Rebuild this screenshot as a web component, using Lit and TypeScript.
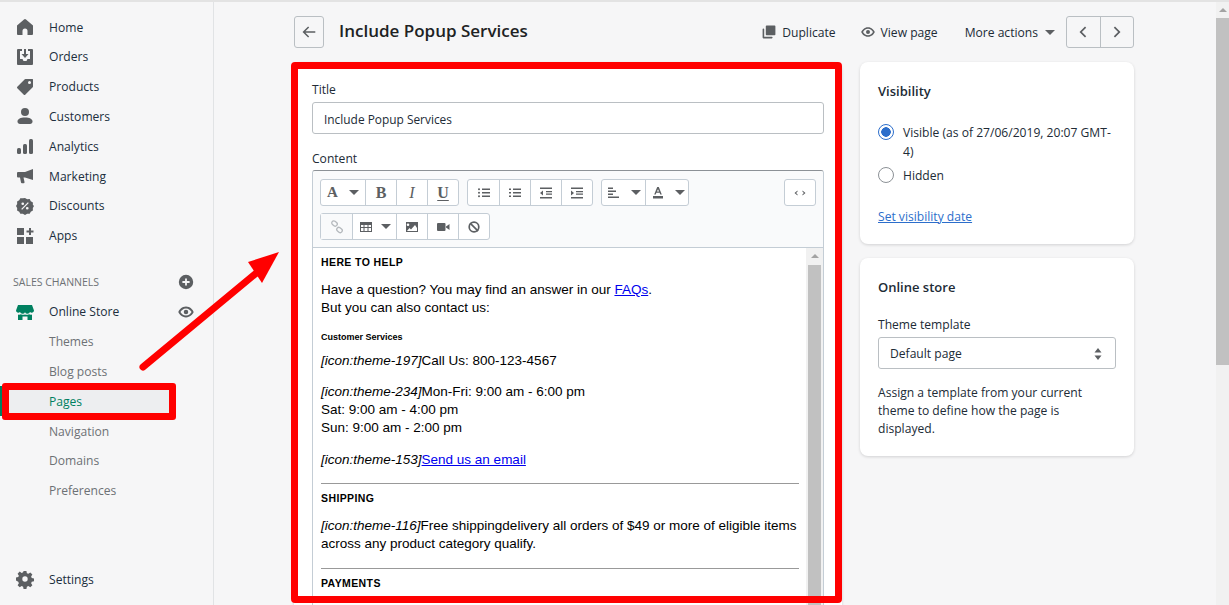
import { LitElement, css, html, svg } from 'lit';
import { customElement } from 'lit/decorators.js';

const ICONS: Record<string, unknown> = {
  home: svg`<path d="M18 8.600 11 2.400a1.500 1.500 0 0 0-2 0L2 8.600V17a1 1 0 0 0 1 1h4.500v-4a2.500 2.500 0 0 1 5 0v4H17a1 1 0 0 0 1-1z"/>`,
  orders: svg`<path fill-rule="evenodd" d="M3 2h4v2H5v8h2.500l1 2h3l1-2H15V4h-2V2h4a1 1 0 0 1 1 1v14a1 1 0 0 1-1 1H3a1 1 0 0 1-1-1V3a1 1 0 0 1 1-1z"/><path d="M9 2h2v5h2.500L10 11 6.500 7H9z"/>`,
  products: svg`<path fill-rule="evenodd" d="M18 2.500V9.500a1 1 0 0 1-.3.7l-7.500 7.500a1 1 0 0 1-1.400 0L2.300 11.200a1 1 0 0 1 0-1.400L9.800 2.300a1 1 0 0 1 .7-.3h7a.5.5 0 0 1 .5.5zM14.500 7a1.500 1.500 0 1 0 0-3 1.500 1.500 0 0 0 0 3z"/>`,
  customers: svg`<circle cx="10" cy="6" r="4"/><path d="M2.500 15.500c0-2.500 3-4 7.500-4s7.500 1.500 7.500 4c0 1.500-1 2.500-2.500 2.500H5c-1.500 0-2.500-1-2.500-2.500z"/>`,
  analytics: svg`<rect x="2" y="12" width="4" height="6" rx="1.500"/><rect x="8" y="8" width="4" height="10" rx="1.500"/><rect x="14" y="3" width="4" height="15" rx="1.500"/>`,
  marketing: svg`<path d="M18 3v11L10 11.500H8.500l1 4.500a1 1 0 0 1-1 1.200H7a1 1 0 0 1-1-.8L5 11.500H3a1 1 0 0 1-1-1v-3.500a1 1 0 0 1 1-1h7z"/>`,
  discounts: svg`<path fill-rule="evenodd" d="M10 1l2.400 1.400 2.800-.1 1.200 2.400 2.400 1.300-.1 2.700L20 10l-1.300 2.300.1 2.700-2.400 1.300-1.200 2.400-2.800-.1L10 20l-2.400-1.400-2.800.1-1.200-2.400-2.400-1.300.1-2.700L0 10l1.300-2.300-.1-2.700 2.400-1.300 1.200-2.400 2.800.1zM7.500 6a1.500 1.500 0 1 0 0 3 1.500 1.500 0 0 0 0-3zm5 5a1.500 1.500 0 1 0 0 3 1.500 1.500 0 0 0 0-3zm.7-5.200-7.400 7.400 1 1 7.400-7.400z" transform="translate(1 1) scale(.9)"/>`,
  apps: svg`<rect x="2" y="2" width="7" height="7"/><rect x="2" y="11" width="7" height="7"/><rect x="11" y="11" width="7" height="7"/><path d="M14 2h2v2.500h2.500v2H16V9h-2V6.500h-2.500v-2H14z"/>`,
  store: svg`<path d="M3 3h14l2 5.500a2.300 2.300 0 0 1-4 1.500 2.700 2.700 0 0 1-5 .3A2.700 2.700 0 0 1 5 10 2.300 2.300 0 0 1 1 8.500z"/><path d="M3 12.500c1 .4 2 .3 3-.2 1.200.7 2.800.7 4 .1 1.200.6 2.800.6 4-.1 1 .5 2 .6 3 .2V18h-4.500v-3.500h-5V18H3z"/>`,
  settings: svg`<path fill-rule="evenodd" d="M8.400 1h3.200l.5 2.500 1.600.7 2.200-1.400 2.300 2.300-1.400 2.200.7 1.600 2.500.5v3.200l-2.500.5-.7 1.600 1.400 2.200-2.300 2.300-2.200-1.400-1.600.7-.5 2.500H8.400l-.5-2.500-1.600-.7-2.200 1.400-2.300-2.300 1.400-2.200-.7-1.600L0 11.600V8.400l2.500-.5.7-1.600-1.400-2.200 2.300-2.300 2.200 1.400 1.600-.7zM10 7a3 3 0 1 0 0 6 3 3 0 0 0 0-6z" transform="translate(1 1) scale(.9)"/>`,
  plus: svg`<path fill-rule="evenodd" d="M10 2a8 8 0 1 0 0 16 8 8 0 0 0 0-16zm1 4H9v3H6v2h3v3h2v-3h3V9h-3z"/>`,
  eye: svg`<path fill-rule="evenodd" d="M10 4c-4.500 0-7.500 3.500-8.500 6 1 2.500 4 6 8.500 6s7.500-3.500 8.500-6c-1-2.500-4-6-8.500-6zm0 2c3 0 5 2 6.200 4-1.200 2-3.200 4-6.200 4s-5-2-6.200-4C5 8 7 6 10 6zm0 1.500a2.500 2.500 0 1 0 0 5 2.500 2.500 0 0 0 0-5z"/>`,
  duplicate: svg`<path d="M7 2h10a1 1 0 0 1 1 1v10a1 1 0 0 1-1 1H7a1 1 0 0 1-1-1V3a1 1 0 0 1 1-1z"/><path d="M2 6.500a1 1 0 0 1 2 0V16h9.500a1 1 0 0 1 0 2H3a1 1 0 0 1-1-1z"/>`,
};

const TOOL_ICONS: Record<string, unknown> = {
  ul: svg`<path d="M6 3.500h8V5H6zM6 7h8v1.500H6zM6 10.500h8V12H6z"/><circle cx="3" cy="4.200" r="1"/><circle cx="3" cy="7.700" r="1"/><circle cx="3" cy="11.200" r="1"/>`,
  ol: svg`<path d="M6 3.500h8V5H6zM6 7h8v1.500H6zM6 10.500h8V12H6zM2 3.500h2V5H2zM2 7h2v1.500H2zM2 10.500h2V12H2z"/>`,
  outdent: svg`<path d="M2 2.500h12V4H2zM8 6h6v1.200H8zM8 8.500h6v1.200H8zM2 12h12v1.500H2zM2 8l3-2.500v5z"/>`,
  indent: svg`<path d="M2 2.500h12V4H2zM7 6h7v1.200H7zM7 8.500h7v1.200H7zM2 12h12v1.500H2zM5 8 2 5.500v5z"/>`,
  align: svg`<path d="M2 2.500h5V4H2zM2 5.500h8V7H2zM2 8.500h5V10H2zM2 11.500h11V13H2z"/>`,
  color: svg`<path d="M7.200 2h1.600l3 7.500h-1.500l-.7-1.800H6.400l-.7 1.800H4.200zM8 4.300 6.900 6.500h2.200zM3 11h10v2.500H3z"/>`,
  link: svg`<g fill="none" stroke="currentColor" stroke-width="1.300"><rect x="2.500" y="2.500" width="6" height="4" rx="2" transform="rotate(40 5.500 4.500)"/><rect x="7.500" y="9" width="6" height="4" rx="2" transform="rotate(40 10.500 11)"/></g>`,
  table: svg`<path fill-rule="evenodd" d="M2 3h12v10H2zm1 3v2h2.500V6zm3.500 0v2h3V6zm4 0v2H13V6zM3 9v3h2.500V9zm3.500 0v3h3V9zm4 0v3H13V9z"/>`,
  image: svg`<path fill-rule="evenodd" d="M2 3h12v10H2zm2 1.500a1.300 1.300 0 1 0 0 2.600 1.300 1.300 0 0 0 0-2.600zM3 12h10V9l-2-3-4 4.500L5.500 9z"/>`,
  video: svg`<rect x="2" y="4" width="8.500" height="8" rx="1"/><path d="M11 7.500 14.500 5v6L11 8.500z"/>`,
  clear: svg`<circle cx="8" cy="8" r="4.800" fill="none" stroke="currentColor" stroke-width="1.700"/><path d="M4.700 3.500l8 8-1.200 1.200-8-8z"/>`,
  code: svg`<path d="M5.500 5.500 2.500 8l3 2.500v-1.200L4 8l1.500-1.300zM10.500 5.500l3 2.500-3 2.500v-1.200L12 8l-1.500-1.300z"/>`,
};

const NAV = [
  ['home', 'Home'], ['orders', 'Orders'], ['products', 'Products'], ['customers', 'Customers'],
  ['analytics', 'Analytics'], ['marketing', 'Marketing'], ['discounts', 'Discounts'], ['apps', 'Apps'],
];

const SUB_NAV = ['Themes', 'Blog posts', 'Pages', 'Navigation', 'Domains', 'Preferences'];

@customElement('app-root')
export class AppRoot extends LitElement {
  static styles = css`
    :host {
      display: block;
      position: relative;
      height: 605px;
      overflow: hidden;
      background: #f6f6f7;
      font-family: "Open Sans", "Noto Sans", sans-serif;
      font-size: 12.100px;
      color: #212b36;
    }
    .page {
      display: flex;
      height: 603px;
      border-top: 2px solid #e3e3e3;
    }
    svg { display: block; fill: currentColor; flex: none; }

    .sidebar {
      width: 214px;
      flex: none;
      box-sizing: border-box;
      border-right: 1px solid #e1e3e5;
      padding: 10.200px 0 11px;
      display: flex;
      flex-direction: column;
    }
    .row {
      height: 29.800px;
      flex: none;
      display: flex;
      align-items: center;
      gap: 14px;
      padding-left: 15px;
      color: #202e3d;
    }
    .row svg { width: 20px; height: 20px; color: #5c5f62; }
    .row .trail { margin-left: auto; margin-right: 18px; width: 18px; height: 18px; }
    .section {
      height: 20px;
      margin: 21.500px 0 5px;
      padding-left: 13px;
      display: flex;
      align-items: center;
      justify-content: space-between;
      font-size: 10.500px;
      color: #6d7175;
    }
    .section svg { width: 18px; height: 18px; color: #5c5f62; margin-right: 18px; }
    .row.store svg:first-child { color: #008060; }
    .sub { padding-left: 49px; color: #6d7175; }
    .sub.active { color: #008060; background: #edeef0; box-shadow: inset 2px 0 #008060; margin-right: 40px; }
    .settings { margin-top: auto; }

    .main {
      flex: 1;
      min-width: 0;
      padding: 14px 0 0 80px;
      overflow: hidden;
    }
    .header {
      width: 840px;
      height: 32px;
      display: flex;
      align-items: center;
      margin-bottom: 14px;
    }
    .icon-btn {
      width: 30px;
      height: 32px;
      box-sizing: border-box;
      border: 1px solid #babfc3;
      border-radius: 3px;
      display: flex;
      align-items: center;
      justify-content: center;
      color: #5c5f62;
    }
    .icon-btn svg { width: 18px; height: 18px; }
    h1 {
      margin: 0 0 3px 15px;
      font-size: 17px;
      font-weight: 600;
      color: #202223;
    }
    .actions {
      margin-left: auto;
      display: flex;
      align-items: center;
    }
    .action {
      display: flex;
      align-items: center;
      gap: 5px;
      margin-right: 24px;
    }
    .action.view { margin-right: 27px; }
    .action svg { width: 16px; height: 16px; color: #5c5f62; }
    .more { margin-right: 11px; gap: 7px; }
    .caret {
      width: 0;
      height: 0;
      border-left: 5px solid transparent;
      border-right: 5px solid transparent;
      border-top: 5px solid #5c5f62;
    }
    .pager {
      width: 68px;
      height: 32px;
      box-sizing: border-box;
      border: 1px solid #babfc3;
      border-radius: 3px;
      display: flex;
      color: #5c5f62;
    }
    .pager span {
      flex: 1;
      display: flex;
      align-items: center;
      justify-content: center;
    }
    .pager span + span { border-left: 1px solid #babfc3; }
    .pager svg { width: 16px; height: 16px; }

    .columns {
      display: flex;
      align-items: flex-start;
      gap: 18px;
      width: 840px;
    }
    .card {
      background: #fff;
      border-radius: 8px;
      box-shadow: 0 1px 3px rgba(63, 63, 68, 0.2);
      box-sizing: border-box;
      padding: 19px 18px 18px;
    }
    .form { width: 548px; flex: none; height: 700px; }
    .side { width: 274px; flex: none; display: flex; flex-direction: column; gap: 14px; }
    label { display: block; line-height: 18px; }
    .input {
      height: 32px;
      box-sizing: border-box;
      margin: 3px 0 16px;
      padding: 1px 11px 0;
      border: 1px solid #babfc3;
      border-radius: 3px;
      display: flex;
      align-items: center;
      font-size: 11.900px;
    }

    .editor {
      margin-top: 2px;
      border: 1px solid #c4cdd5;
      border-top-color: #8c9196;
      border-radius: 3px 3px 0 0;
      height: 520px;
    }
    .toolbar {
      height: 77px;
      box-sizing: border-box;
      background: #f9fafb;
      border-bottom: 1px solid #c4cdd5;
      border-radius: 3px 3px 0 0;
      padding: 8px 7px 0;
      display: flex;
      flex-direction: column;
      gap: 7px;
    }
    .tool-row { display: flex; gap: 8px; }
    .group {
      display: flex;
      height: 27px;
      box-sizing: border-box;
      border: 1px solid #c4cdd5;
      border-radius: 3px;
      background: #fff;
    }
    .code-btn { margin-left: auto; }
    .code-btn .tool { width: 30px; }
    .tool {
      width: 31px;
      box-sizing: border-box;
      display: flex;
      align-items: center;
      justify-content: center;
      gap: 7px;
      color: #5c5f62;
      font: 700 16px "Liberation Serif", serif;
    }
    .tool + .tool { border-left: 1px solid #c4cdd5; }
    .tool.wide { width: 44px; }
    .tool.font { gap: 11px; font-size: 15px; }
    .tool.narrow { width: 43px; gap: 9px; }
    .tool.disabled { background: #f9fafb; color: #b5b9bd; }
    .tool svg { width: 16px; height: 16px; }
    .tool i { font-style: italic; font-weight: 400; }
    .tool u { text-underline-offset: 2px; }

    .body {
      display: flex;
      height: 440px;
      font: 13.500px/18px "Liberation Sans", Arial, sans-serif;
      color: #000;
    }
    .content { flex: 1; min-width: 0; padding: 7px 7px 0 8px; }
    .content p { margin: 0; }
    .content a { color: #0000ee; }
    .content hr { border: 0; border-top: 1px solid #999; margin: 14px 0 7px; }
    .content .h4 { font-weight: 700; font-size: 10.500px; line-height: 14px; letter-spacing: .4px; }
    .content .h6 { font-weight: 700; font-size: 9px; line-height: 12px; margin: 14px 0 9px; }
    .content .gap-s { margin-top: 12px; }
    .content .gap-m { margin-top: 13px; }
    .content .gap-l { margin-top: 14px; }
    .content .rule-b { margin-top: 15px; }
    .content .tiny { font-weight: 400; font-size: 9.500px; margin-top: 10px; }

    .bar {
      width: 17px;
      flex: none;
      background: #f1f1f1;
      display: flex;
      flex-direction: column;
      align-items: center;
    }
    .up {
      width: 0;
      height: 0;
      margin: 6px 0 7px;
      border-left: 4px solid transparent;
      border-right: 4px solid transparent;
      border-bottom: 4px solid #a3a3a3;
    }
    .thumb { width: 13px; flex: 1; background: #c1c1c1; }

    h2 { margin: 0; font-size: 13px; font-weight: 600; line-height: 20px; color: #212b36; }
    .vis h2 { margin-bottom: 23px; }
    .radio-row {
      display: flex;
      gap: 9px;
      line-height: 18.500px;
      margin-bottom: 6px;
    }
    .radio {
      width: 16px;
      height: 16px;
      flex: none;
      box-sizing: border-box;
      border: 1px solid #8c9196;
      border-radius: 50%;
      background: #fff;
    }
    .radio.on {
      border: 1px solid #2c6ecb;
      background: radial-gradient(circle, #2c6ecb 0 4.500px, #fff 5px);
    }
    .link {
      display: block;
      margin-top: 22px;
      color: #2c6ecb;
      text-decoration: underline;
      line-height: 18px;
    }
    .vis { height: 182px; }
    .store-card { height: 198px; }
    .store-card h2 { margin-bottom: 19px; }
    .select {
      height: 32px;
      box-sizing: border-box;
      margin-top: 3px;
      padding: 1px 12px 0 11px;
      border: 1px solid #babfc3;
      border-radius: 3px;
      display: flex;
      align-items: center;
      justify-content: space-between;
    }
    .select svg { width: 10px; height: 14px; color: #5c5f62; }
    .help { margin: 15px 0 0; line-height: 18px; }

    .page-bar {
      width: 13px;
      flex: none;
      background: #f1f1f1;
      display: flex;
      flex-direction: column;
      align-items: center;
    }
    .page-bar .up { margin: 6px 0 6px; }
    .page-bar .thumb { flex: none; width: 13px; height: 347px; }

    .box-card {
      position: absolute;
      left: 291px;
      top: 62px;
      width: 551px;
      height: 541px;
      box-sizing: border-box;
      border: 7px solid #f00;
      border-radius: 4px;
    }
    .box-pages {
      position: absolute;
      left: 2px;
      top: 383px;
      width: 174px;
      height: 37px;
      box-sizing: border-box;
      border: 7px solid #f00;
      border-radius: 3px;
    }
    .arrow { position: absolute; left: 130px; top: 240px; width: 160px; height: 140px; }
  `;

  private icon(name: string, cls = '') {
    return html`<svg class=${cls} viewBox="0 0 20 20">${ICONS[name]}</svg>`;
  }

  private tool(name: string, opts: { caret?: 'wide' | 'narrow'; disabled?: boolean } = {}) {
    const cls = `tool ${opts.caret ?? ''} ${opts.disabled ? 'disabled' : ''}`;
    return html`<span class=${cls}>
      <svg viewBox="0 0 16 16">${TOOL_ICONS[name]}</svg>
      ${opts.caret ? html`<span class="caret"></span>` : ''}
    </span>`;
  }

  private renderSidebar() {
    return html`
      <nav class="sidebar">
        ${NAV.map(([icon, label]) => html`<div class="row">${this.icon(icon)}<span>${label}</span></div>`)}
        <div class="section"><span>SALES CHANNELS</span>${this.icon('plus')}</div>
        <div class="row store">${this.icon('store')}<span>Online Store</span>${this.icon('eye', 'trail')}</div>
        ${SUB_NAV.map((label) => html`<div class="row sub ${label === 'Pages' ? 'active' : ''}">${label}</div>`)}
        <div class="row settings">${this.icon('settings')}<span>Settings</span></div>
      </nav>
    `;
  }

  private renderHeader() {
    return html`
      <header class="header">
        <span class="icon-btn">
          <svg viewBox="0 0 20 20"><path d="M17 9.200H6l4.200-4.200L9 3.800 2.800 10 9 16.200l1.200-1.200L6 10.800h11z"/></svg>
        </span>
        <h1>Include Popup Services</h1>
        <div class="actions">
          <span class="action">${this.icon('duplicate')}Duplicate</span>
          <span class="action view">${this.icon('eye')}View page</span>
          <span class="action more">More actions<span class="caret"></span></span>
          <span class="pager">
            <span><svg viewBox="0 0 16 16"><path d="M10 2.500 4.500 8l5.500 5.500 1.200-1.200L6.900 8l4.300-4.300z"/></svg></span>
            <span><svg viewBox="0 0 16 16"><path d="M6 2.500 11.500 8 6 13.500l-1.200-1.200L9.100 8 4.800 3.700z"/></svg></span>
          </span>
        </div>
      </header>
    `;
  }

  private renderToolbar() {
    return html`
      <div class="toolbar">
        <div class="tool-row">
          <div class="group">
            <span class="tool wide font">A<span class="caret"></span></span>
            <span class="tool">B</span>
            <span class="tool"><i>I</i></span>
            <span class="tool"><u>U</u></span>
          </div>
          <div class="group">
            ${this.tool('ul')}${this.tool('ol')}${this.tool('outdent')}${this.tool('indent')}
          </div>
          <div class="group">
            ${this.tool('align', { caret: 'narrow' })}${this.tool('color', { caret: 'narrow' })}
          </div>
          <div class="group code-btn">${this.tool('code')}</div>
        </div>
        <div class="tool-row">
          <div class="group">
            ${this.tool('link', { disabled: true })}${this.tool('table', { caret: 'wide' })}
            ${this.tool('image')}${this.tool('video')}${this.tool('clear')}
          </div>
        </div>
      </div>
    `;
  }

  private renderContent() {
    return html`
      <div class="body">
        <div class="content">
          <p class="h4">HERE TO HELP</p>
          <p class="gap-s">Have a question? You may find an answer in our <a href="#">FAQs</a>.<br />But you can also contact us:</p>
          <p class="h6">Customer Services</p>
          <p><em>[icon:theme-197]</em>Call Us: 800-123-4567</p>
          <p class="gap-m"><em>[icon:theme-234]</em>Mon-Fri: 9:00 am - 6:00 pm<br />Sat: 9:00 am - 4:00 pm<br />Sun: 9:00 am - 2:00 pm</p>
          <p class="gap-l"><em>[icon:theme-153]</em><a href="#">Send us an email</a></p>
          <hr />
          <p class="h4">SHIPPING</p>
          <p class="gap-s"><em>[icon:theme-116]</em>Free shippingdelivery all orders of $49 or more of eligible items across any product category qualify.</p>
          <hr class="rule-b" />
          <p class="h4">PAYMENTS</p>
          <p class="tiny">Accept the following payment methods</p>
        </div>
        <div class="bar"><span class="up"></span><span class="thumb"></span></div>
      </div>
    `;
  }

  private renderSide() {
    return html`
      <aside class="side">
        <section class="card vis">
          <h2>Visibility</h2>
          <div class="radio-row"><span class="radio on"></span><span>Visible (as of 27/06/2019, 20:07 GMT-4)</span></div>
          <div class="radio-row"><span class="radio"></span><span>Hidden</span></div>
          <a class="link">Set visibility date</a>
        </section>
        <section class="card store-card">
          <h2>Online store</h2>
          <label>Theme template</label>
          <div class="select">
            <span>Default page</span>
            <svg viewBox="0 0 10 14"><path d="M5 1 8.500 5.500h-7zM5 13 1.500 8.500h7z"/></svg>
          </div>
          <p class="help">Assign a template from your current theme to define how the page is displayed.</p>
        </section>
      </aside>
    `;
  }

  render() {
    return html`
      <div class="page">
        ${this.renderSidebar()}
        <main class="main">
          ${this.renderHeader()}
          <div class="columns">
            <section class="card form">
              <label>Title</label>
              <div class="input">Include Popup Services</div>
              <label>Content</label>
              <div class="editor">${this.renderToolbar()}${this.renderContent()}</div>
            </section>
            ${this.renderSide()}
          </div>
        </main>
        <div class="page-bar"><span class="up"></span><span class="thumb"></span></div>
      </div>
      <div class="box-card"></div>
      <div class="box-pages"></div>
      <svg class="arrow" viewBox="0 0 160 140">
        <line x1="13" y1="127" x2="130" y2="30" stroke="#f00" stroke-width="7" stroke-linecap="round" />
        <path d="M149 12 118 22 132 43z" fill="#f00" />
      </svg>
    `;
  }
}
